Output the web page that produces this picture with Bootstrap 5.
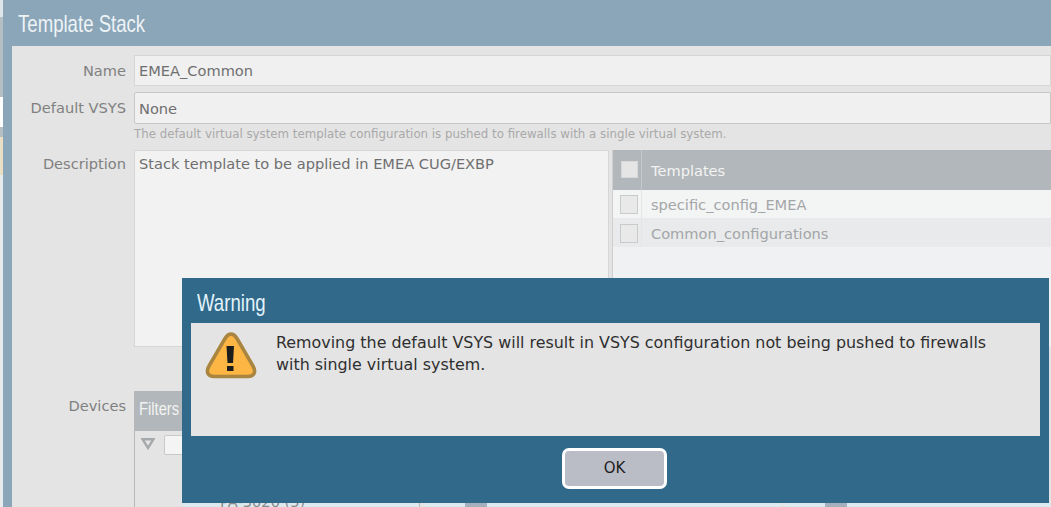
<!DOCTYPE html>
<html lang="en">

<head>
    <meta charset="UTF-8" />
    <title>Template Stack</title>
    <link rel="stylesheet" href="https://cdn.jsdelivr.net/npm/bootstrap@5.3.0/dist/css/bootstrap.min.css" />
    <style>
        html, body {
            height: 507px;
            overflow: hidden;
        }

        body {
            position: relative;
            padding-left: 3px;
            background: linear-gradient(#dfe6ea 0 17px, #b5bec3 17px 97px, #fff 97px 127px, #b5bec3 127px 137px, #e9dfc4 137px 175px, #e8ebee 175px);
            font-family: "DejaVu Sans", sans-serif;
            font-size: 14.6px;
            color: #808080;
        }

        .stack-window {
            height: 507px;
            padding-left: 9px;
            background: #8aa6b8;
        }

        .stack-title {
            height: 46px;
            margin-left: -2px;
            padding-left: 8px;
            font-family: "Liberation Sans", sans-serif;
            font-size: 24px;
            line-height: 47px;
            color: #eef3f6;
        }

        .narrow-text {
            display: inline-block;
            transform-origin: left center;
            transform: scaleX(.775);
        }

        .stack-body {
            height: 461px;
            padding-top: 9px;
            background: #e4e4e4;
            white-space: nowrap;
            overflow: hidden;
        }

        .field-label {
            flex: 0 0 122px;
            padding-right: 8px;
            text-align: right;
        }

        .field-box {
            flex: 1 1 auto;
            padding-left: 4px;
            border: 1px solid #d6d6d6;
            background: #f0f0f0;
            color: #6f6f6f;
        }

        .name-row { height: 31px; }
        .name-row .field-box { line-height: 30px; }
        .vsys-row { height: 32px; margin-top: 6px; }
        .vsys-row .field-box { line-height: 32px; border-color: #c8c8c8; border-radius: 2px 0 0 2px; }
        .name-row .field-label { line-height: 32px; }
        .vsys-row .field-label { line-height: 31px; }

        .field-hint {
            height: 24px;
            padding-left: 122px;
            font-size: 11.8px;
            line-height: 21px;
            color: #a9a9a9;
        }

        .desc-row { height: 197px; margin-top: 2px; }
        .desc-row .field-label { line-height: 27px; }

        .desc-box {
            flex: 0 0 475px;
            height: 197px;
            padding: 3px 4px;
            border: 1px solid #d6d6d6;
            background: #f2f2f2;
            line-height: 20px;
            color: #6f6f6f;
        }

        .tpl-panel {
            flex: 1 1 auto;
            margin-left: 3px;
            border-left: 1px solid #cfcfcf;
            background: #f0f1f2;
            height: 197px;
        }

        .tpl-head {
            height: 40px;
            background: #b1b7ba;
            color: #f3f3f3;
            line-height: 42px;
        }

        .tpl-row { color: #a3a6a8; }
        .tpl-row.odd { height: 28px; line-height: 30px; background: #f3f4f4; }
        .tpl-row.even { height: 29px; line-height: 31px; background: #e9eaeb; }

        .tpl-check {
            flex: 0 0 29px;
            border-right: 1px solid #e4e5e6;
        }

        .tpl-head .tpl-check { border-right-color: #c4c9cb; }

        .check-box {
            display: block;
            width: 18px;
            height: 19px;
            margin: 5px 0 0 7px;
            border: 1px solid #c9caca;
            background: #e9e9e9;
        }

        .tpl-row.even .check-box { margin-top: 6px; }

        .tpl-head .check-box {
            width: 17px;
            height: 17px;
            margin: 11px 0 0 8px;
            border-color: #d8d8d8;
            background: #e5e5e5;
        }

        .tpl-text { padding-left: 9px; }

        .devices-row { margin-top: 44px; }
        .devices-row .field-label { line-height: 29px; }

        .filter-panel {
            flex: 0 0 286px;
            height: 130px;
            border-left: 1px solid #b8b8b8;
            border-right: 1px solid #b8b8b8;
        }

        .filter-head {
            height: 40px;
            padding-left: 4px;
            background: #b1b7ba;
            font-family: "Liberation Sans", sans-serif;
            font-size: 19px;
            line-height: 35px;
            color: #f3f3f3;
        }

        .filter-tool {
            height: 60px;
            padding: 4px 0 0 6px;
        }

        .filter-arrow { margin-top: 3px; }

        .filter-input {
            width: 40px;
            height: 20px;
            margin-left: 9px;
            border: 1px solid #c9c9c9;
            border-radius: 2px;
            background: #f4f4f4;
        }

        .tree-row {
            height: 30px;
            margin-left: 48px;
            padding-left: 37px;
            background: #dce9ef;
            line-height: 22px;
            color: #8a8a8a;
        }

        .device-cells {
            margin: 112px 0 0 5px;
            gap: 4px;
        }

        .device-cell {
            height: 20px;
            padding-left: 40px;
            background: #dce9ef;
        }

        .cell-a { flex: 0 0 356px; }
        .cell-b { flex: 1 1 auto; }

        .cell-bar {
            display: block;
            width: 22px;
            height: 4px;
            background: #a4b0bb;
        }

        /* dialog on top of the form */
        .warn-dialog {
            position: absolute;
            left: 182px;
            top: 278px;
            width: 867px;
            height: 225px;
            padding: 45px 9px 0;
            background: #30698a;
        }

        .warn-title {
            position: absolute;
            left: 15px;
            top: 11px;
            font-family: "Liberation Sans", sans-serif;
            font-size: 24px;
            line-height: 28px;
            color: #e3f3fb;
        }

        .warn-msg {
            height: 113px;
            padding: 9px 14px 0 14px;
            background: #e4e4e4;
            color: #2f2f2f;
            font-size: 15.9px;
            line-height: 22px;
        }

        .warn-icon {
            flex: 0 0 72px;
            margin: -1px 0 0 -1px;
        }

        .warn-foot { height: 67px; }

        .warn-ok {
            width: 105px;
            height: 41px;
            margin: 12px 2px 0 0;
            padding: 0;
            border: 3px solid #fff;
            border-radius: 7px;
            background: #bbbdc6;
            color: #222;
            font-size: 15px;
        }

        .warn-ok:hover { background: #bbbdc6; border-color: #fff; color: #222; }
    </style>
</head>

<body>
    <div class="stack-window">
        <div class="stack-title"><span class="narrow-text">Template Stack</span></div>
        <div class="stack-body">
            <div class="d-flex name-row">
                <div class="field-label">Name</div>
                <div class="field-box">EMEA_Common</div>
            </div>
            <div class="d-flex vsys-row">
                <div class="field-label">Default VSYS</div>
                <div class="field-box">None</div>
            </div>
            <div class="field-hint">The default virtual system template configuration is pushed to firewalls with a single virtual system.</div>
            <div class="d-flex desc-row">
                <div class="field-label">Description</div>
                <div class="desc-box">Stack template to be applied in EMEA CUG/EXBP</div>
                <div class="tpl-panel">
                    <div class="d-flex tpl-head">
                        <div class="tpl-check"><span class="check-box"></span></div>
                        <div class="tpl-text">Templates</div>
                    </div>
                    <div class="d-flex tpl-row odd">
                        <div class="tpl-check"><span class="check-box"></span></div>
                        <div class="tpl-text">specific_config_EMEA</div>
                    </div>
                    <div class="d-flex tpl-row even">
                        <div class="tpl-check"><span class="check-box"></span></div>
                        <div class="tpl-text">Common_configurations</div>
                    </div>
                </div>
            </div>
            <div class="d-flex devices-row">
                <div class="field-label">Devices</div>
                <div class="filter-panel">
                    <div class="filter-head"><span class="narrow-text">Filters</span></div>
                    <div class="d-flex filter-tool">
                        <svg class="filter-arrow" width="14" height="12" viewBox="0 0 14 12"><path d="M1.500 1.200h11L7 10z" fill="none" stroke="#a5a9ab" stroke-width="2.400" /></svg>
                        <div class="filter-input"></div>
                    </div>
                    <div class="tree-row">PA-3020 (5)</div>
                </div>
                <div class="d-flex flex-grow-1 device-cells">
                    <div class="device-cell cell-a"><span class="cell-bar"></span></div>
                    <div class="device-cell cell-b"><span class="cell-bar"></span></div>
                </div>
            </div>
        </div>
    </div>

    <div class="warn-dialog">
        <div class="warn-title"><span class="narrow-text">Warning</span></div>
        <div class="d-flex warn-msg">
            <div class="warn-icon">
                <svg width="54" height="48" viewBox="0 0 54 48">
                    <path d="M27 3 C24 3 22.500 5 21 7.500 L5 35 C1.500 41 4 45.500 10 45.500 H44 C50 45.500 52.500 41 49 35 L33 7.500 C31.500 5 30 3 27 3Z" fill="#fdb544" stroke="#a9853f" stroke-width="3.500" />
                    <path d="M22.500 15h7.500l-1 17h-5.500z" fill="#1c1c1c" />
                    <rect x="23" y="35" width="6.500" height="5" fill="#1c1c1c" />
                </svg>
            </div>
            <div>Removing the default VSYS will result in VSYS configuration not being pushed to firewalls<br />with single virtual system.</div>
        </div>
        <div class="d-flex justify-content-center warn-foot">
            <button type="button" class="btn warn-ok">OK</button>
        </div>
    </div>
    <script src="https://cdn.jsdelivr.net/npm/bootstrap@5.3.0/dist/js/bootstrap.bundle.min.js"></script>
</body>

</html>
